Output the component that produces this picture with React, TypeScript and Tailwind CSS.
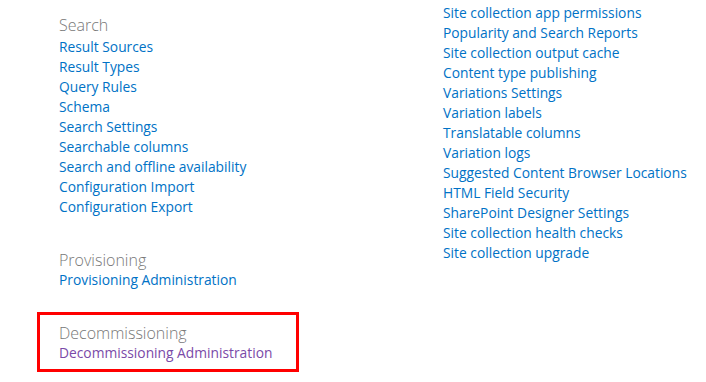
const searchLinks = [
  'Result Sources',
  'Result Types',
  'Query Rules',
  'Schema',
  'Search Settings',
  'Searchable columns',
  'Search and offline availability',
  'Configuration Import',
  'Configuration Export',
]

const siteCollectionLinks = [
  'Site collection app permissions',
  'Popularity and Search Reports',
  'Site collection output cache',
  'Content type publishing',
  'Variations Settings',
  'Variation labels',
  'Translatable columns',
  'Variation logs',
  'Suggested Content Browser Locations',
  'HTML Field Security',
  'SharePoint Designer Settings',
  'Site collection health checks',
  'Site collection upgrade',
]

function SectionTitle({ children }: { children: React.ReactNode }) {
  return <div className="h-5 text-[16px] leading-5 font-light text-[#777777]">{children}</div>
}

function LinkItem({ label, visited = false }: { label: string; visited?: boolean }) {
  return (
    <a
      href="#"
      className={`block h-5 whitespace-nowrap text-[13.8px] leading-5 ${visited ? 'text-[#7a4aa8]' : 'text-[#0072c6]'}`}
    >
      {label}
    </a>
  )
}

export default function App() {
  return (
    <div
      className="flex h-[382px] w-[706px] overflow-hidden bg-white"
      style={{ fontFamily: '"Open Sans", "Noto Sans", sans-serif' }}
    >
      {/* Left column */}
      <div className="flex w-[443px] flex-col pl-[37px]">
        <div className="flex flex-col pl-[22px] pt-[15px]">
          <div className="mb-[2px]">
            <SectionTitle>Search</SectionTitle>
          </div>
          {searchLinks.map((l) => (
            <LinkItem key={l} label={l} />
          ))}

          <div className="mt-[33px]">
            <SectionTitle>Provisioning</SectionTitle>
          </div>
          <LinkItem label="Provisioning Administration" />
        </div>

        {/* Highlighted section */}
        <div className="mt-[22px] flex h-[60px] w-[262px] flex-col border-[3px] border-[#ff0000] pl-[19px] pt-[8px]">
          <SectionTitle>Decommissioning</SectionTitle>
          <LinkItem label="Decommissioning Administration" visited />
        </div>
      </div>

      {/* Right column */}
      <div className="flex flex-col pt-[3px]">
        {siteCollectionLinks.map((l) => (
          <LinkItem key={l} label={l} />
        ))}
      </div>
    </div>
  )
}
